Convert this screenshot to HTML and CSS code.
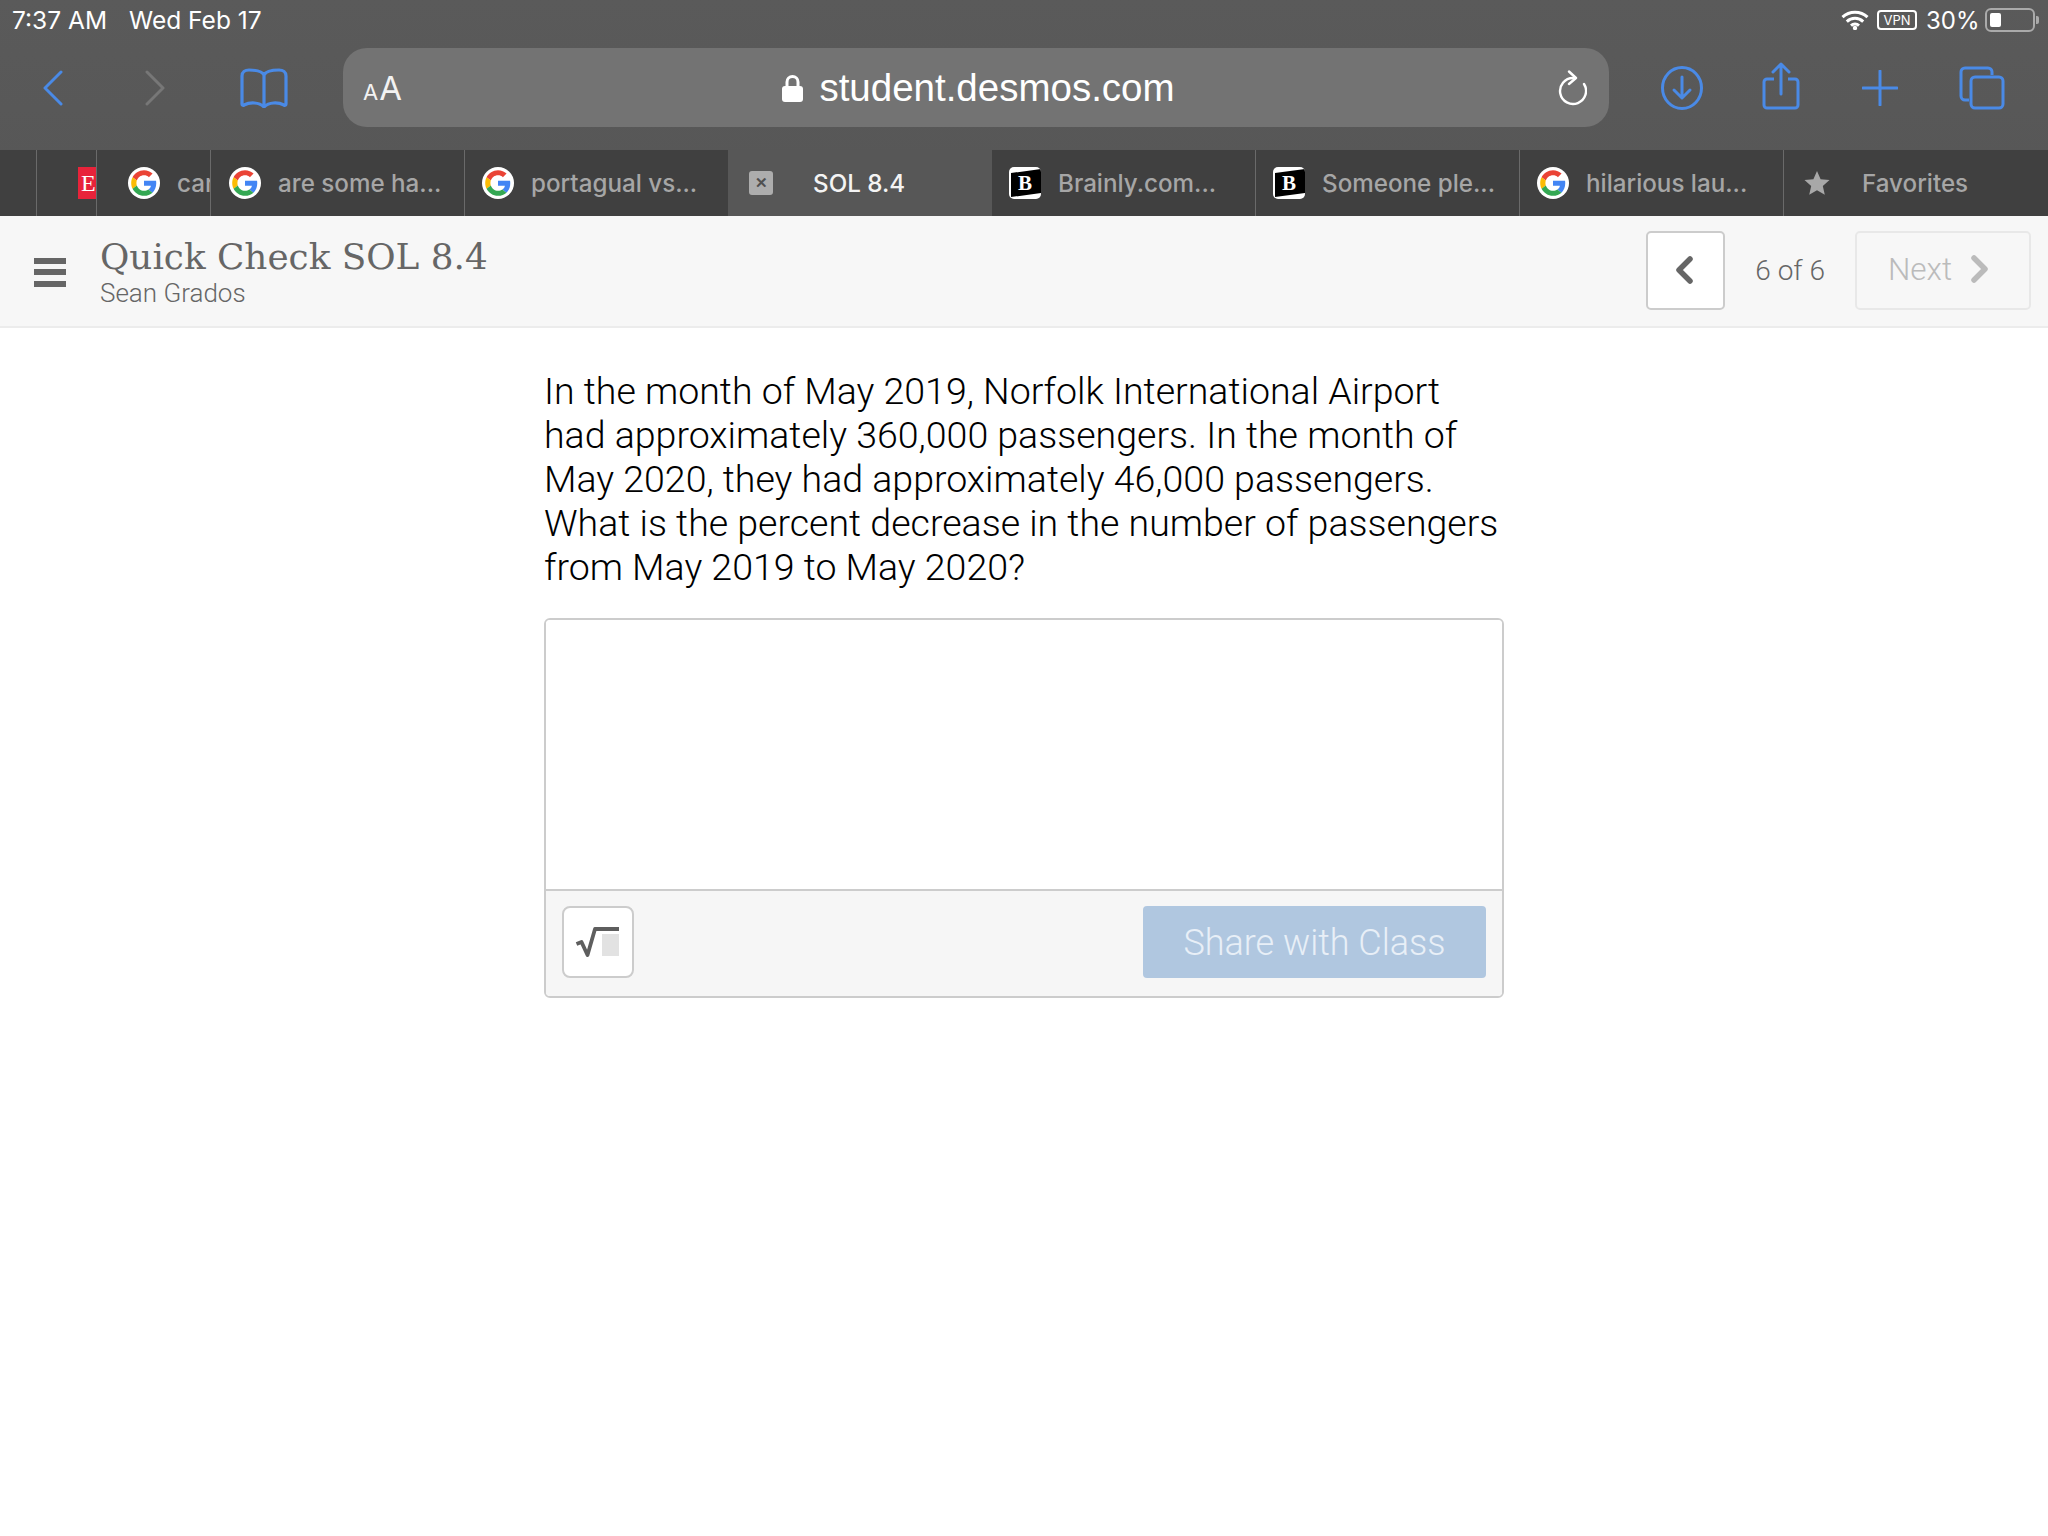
FILE: index.html
```html
<!DOCTYPE html>
<html lang="en">
<head>
<meta charset="utf-8">
<title>Quick Check SOL 8.4</title>
<link rel="stylesheet" href="styles.css">
</head>
<body>
<svg class="defs" width="0" height="0" aria-hidden="true">
  <symbol id="google" viewBox="-6 -6 60 60">
    <circle cx="24" cy="24" r="30" fill="#fff"/>
    <path fill="#EA4335" d="M24 9.5c3.54 0 6.71 1.22 9.21 3.6l6.85-6.85C35.9 2.38 30.47 0 24 0 14.62 0 6.51 5.38 2.56 13.22l7.98 6.19C12.43 13.72 17.74 9.5 24 9.5z"/>
    <path fill="#4285F4" d="M46.98 24.55c0-1.57-.15-3.09-.38-4.55H24v9.02h12.94c-.58 2.96-2.26 5.48-4.78 7.18l7.73 6c4.51-4.18 7.09-10.36 7.09-17.65z"/>
    <path fill="#FBBC05" d="M10.53 28.59c-.48-1.45-.76-2.99-.76-4.59s.27-3.14.76-4.59l-7.98-6.19C.92 16.46 0 20.12 0 24c0 3.88.92 7.54 2.56 10.78l7.97-6.19z"/>
    <path fill="#34A853" d="M24 48c6.48 0 11.93-2.13 15.89-5.81l-7.73-6c-2.15 1.45-4.92 2.3-8.16 2.3-6.26 0-11.57-4.22-13.47-9.91l-7.98 6.19C6.51 42.62 14.62 48 24 48z"/>
  </symbol>
</svg>

<header class="chrome">
  <div class="status">
    <div class="status-left"><span>7:37 AM</span><span>Wed Feb 17</span></div>
    <div class="status-right">
      <svg class="wifi" viewBox="0 0 28 20"><path d="M1.500 7.200a18 18 0 0 1 25 0M5.800 11.600a12 12 0 0 1 16.400 0M10 15.600a6 6 0 0 1 8 0" fill="none" stroke="#fff" stroke-width="3"/><circle cx="14" cy="18" r="2.200" fill="#fff"/></svg>
      <span class="vpn">VPN</span>
      <span class="pct">30%</span>
      <span class="battery"><span class="battery-fill"></span></span>
    </div>
  </div>
  <div class="toolbar">
    <svg class="ic ic-back" viewBox="0 0 21 36"><path d="M19 2 3 18l16 16" fill="none" stroke="#4a8ae6" stroke-width="3" stroke-linecap="round" stroke-linejoin="round"/></svg>
    <svg class="ic ic-forward" viewBox="0 0 21 36"><path d="M2 2l16 16L2 34" fill="none" stroke="#777" stroke-width="3" stroke-linecap="round" stroke-linejoin="round"/></svg>
    <svg class="ic ic-book" viewBox="0 0 48 40"><path d="M24 7C22 3 15 2 9 2 5 2 2 4 2 8v28c0 1 1 2 2 1 6-3 15-3 20 2 5-5 14-5 20-2 1 1 2 0 2-1V8c0-4-3-6-7-6-6 0-13 1-15 5Zm0 0v32" fill="none" stroke="#4a8ae6" stroke-width="3.200" stroke-linejoin="round"/></svg>
    <div class="url">
      <div class="url-aa"><span class="aa-small">A</span><span class="aa-big">A</span></div>
      <div class="url-host">
        <svg class="lock" viewBox="0 0 21 28"><path d="M5 13V8a5.500 5.500 0 0 1 11 0v5" fill="none" stroke="#fff" stroke-width="3"/><rect y="12" width="21" height="16" rx="3" fill="#fff"/></svg>
        <span>student.desmos.com</span>
      </div>
      <svg class="reload" viewBox="0 0 30 36"><path d="M16 8A13 13 0 1 0 27 14" fill="none" stroke="#fff" stroke-width="2.400" stroke-linecap="round"/><path d="M12 1.500 19 8l-7 6" fill="none" stroke="#fff" stroke-width="2.400" stroke-linecap="round" stroke-linejoin="round"/></svg>
    </div>
    <svg class="ic ic-download" viewBox="0 0 42 44"><ellipse cx="21" cy="22" rx="19.500" ry="20.500" fill="none" stroke="#4a8ae6" stroke-width="3"/><path d="M21 11v21M13 24l8 8 8-8" fill="none" stroke="#4a8ae6" stroke-width="3" stroke-linecap="round" stroke-linejoin="round"/></svg>
    <svg class="ic ic-share" viewBox="0 0 38 48"><path d="M12 17H5a3 3 0 0 0-3 3v23a3 3 0 0 0 3 3h28a3 3 0 0 0 3-3V20a3 3 0 0 0-3-3h-7" fill="none" stroke="#4a8ae6" stroke-width="3"/><path d="M19 32V2M11 10l8-8 8 8" fill="none" stroke="#4a8ae6" stroke-width="3" stroke-linecap="round" stroke-linejoin="round"/></svg>
    <svg class="ic ic-plus" viewBox="0 0 36 36"><path d="M18 1v34M1 18h34" fill="none" stroke="#4a8ae6" stroke-width="3" stroke-linecap="round"/></svg>
    <svg class="ic ic-tabs" viewBox="0 0 46 44"><path d="M10 34H6a4 4 0 0 1-4-4V6a4 4 0 0 1 4-4h23a4 4 0 0 1 4 4v3" fill="none" stroke="#4a8ae6" stroke-width="3"/><rect x="12" y="11" width="32" height="31" rx="4" fill="none" stroke="#4a8ae6" stroke-width="3"/></svg>
  </div>
  <nav class="tabs">
    <div class="tab tab-stub"></div>
    <div class="tab tab-e"><span class="fav-e">E</span></div>
    <div class="tab tab-narrow"><svg class="fav"><use href="#google"/></svg><span>car</span></div>
    <div class="tab tab-g1"><svg class="fav"><use href="#google"/></svg><span>are some ha...</span></div>
    <div class="tab"><svg class="fav"><use href="#google"/></svg><span>portagual vs...</span></div>
    <div class="tab tab-active"><span class="close">&#x2715;</span><span>SOL 8.4</span></div>
    <div class="tab tab-noline"><span class="fav-b"><span class="fav-b-letter">B</span></span><span>Brainly.com...</span></div>
    <div class="tab"><span class="fav-b"><span class="fav-b-letter">B</span></span><span>Someone ple...</span></div>
    <div class="tab"><svg class="fav"><use href="#google"/></svg><span>hilarious lau...</span></div>
    <div class="tab tab-fav"><svg class="star" viewBox="0 0 26 26"><path d="M13 1l3.600 8.300 8.900.8-6.700 5.900 2 8.800L13 20.200 5.200 24.800l2-8.800L.5 10.100l8.900-.8z" fill="#a8a8a8"/></svg><span>Favorites</span></div>
  </nav>
</header>

<section class="activity">
  <button class="burger" aria-label="Menu"><span></span><span></span><span></span></button>
  <div class="titles">
    <div class="title">Quick Check SOL 8.4</div>
    <div class="author">Sean Grados</div>
  </div>
  <div class="pager">
    <button class="prev" aria-label="Previous"><svg viewBox="0 0 20 28"><path d="M16 3 5 14l11 11" fill="none" stroke="#666" stroke-width="5.500" stroke-linecap="round" stroke-linejoin="round"/></svg></button>
    <span class="count">6 of 6</span>
    <button class="next"><span>Next</span><svg viewBox="0 0 20 28"><path d="M4 3l11 11L4 25" fill="none" stroke="#bbb" stroke-width="5.500" stroke-linecap="round" stroke-linejoin="round"/></svg></button>
  </div>
</section>

<main class="content">
  <p class="question">In the month of May 2019, Norfolk International Airport<br>had approximately 360,000 passengers. In the month of<br>May 2020, they had approximately 46,000 passengers.<br>What is the percent decrease in the number of passengers<br>from May 2019 to May 2020?</p>
  <div class="answer">
    <div class="answer-input"></div>
    <div class="answer-foot">
      <button class="math" aria-label="Math"><svg viewBox="0 0 46 32"><rect x="27" y="8" width="17" height="22" fill="#e2e2e2"/><path d="M1.500 18l5-2 6 13L20 3h24" fill="none" stroke="#5e5e5e" stroke-width="3.800" stroke-linejoin="round"/></svg></button>
      <button class="share">Share with Class</button>
    </div>
  </div>
</main>
</body>
</html>
```
FILE: styles.css
```css
* { box-sizing: border-box; }
html, body { margin: 0; padding: 0; }
body { width: 2048px; height: 1536px; background: #fff; font-family: Roboto, "Liberation Sans", Arial, sans-serif; font-weight: 300; overflow: hidden; }
button { font: inherit; padding: 0; cursor: default; }
.defs { position: absolute; }

.chrome { background: linear-gradient(#5a5a5a, #565656); color: #fff; font-weight: 400; }
.status { height: 40px; display: flex; justify-content: space-between; align-items: center; padding: 0 13px 0 12px; font-family: Inter, sans-serif; font-size: 24.500px; }
.status-left { display: flex; gap: 22px; }
.status-right { display: flex; align-items: center; }
.wifi { width: 28px; height: 20px; }
.vpn { margin-left: 8px; width: 40px; height: 20px; border: 2px solid #fff; border-radius: 4px; font-size: 13px; line-height: 16px; text-align: center; }
.pct { margin-left: 9px; width: 52px; font-size: 24px; }
.battery { margin-left: 7px; width: 50px; height: 24px; padding: 3px; border: 2px solid #aaa; border-radius: 6px; display: block; position: relative; }
.battery::after { content: ""; position: absolute; right: -6px; top: 6px; width: 3px; height: 8px; background: #aaa; border-radius: 0 2px 2px 0; }
.battery-fill { display: block; width: 11px; height: 100%; background: #fff; border-radius: 2px; }

.toolbar { height: 110px; padding: 8px 0 22px 42px; display: flex; align-items: center; }
.ic { flex: none; display: block; }
.ic-back { width: 21px; height: 36px; }
.ic-forward { width: 21px; height: 36px; margin-left: 82px; }
.ic-book { width: 48px; height: 40px; margin-left: 74px; }
.url { flex: none; margin: -1px 0 0 55px; width: 1266px; height: 79px; background: #737373; border-radius: 24px; display: grid; grid-template-columns: 1fr auto 1fr; align-items: center; padding: 0 22px 0 20px; }
.url-aa { font-family: Inter, sans-serif; color: #f2f2f2; display: flex; align-items: baseline; }
.aa-small { font-size: 22px; }
.aa-big { font-size: 33px; margin-left: 1px; }
.url-host { display: flex; align-items: center; gap: 16px; padding-left: 7px; font-family: "Liberation Sans", sans-serif; font-size: 38.500px; color: #fff; }
.lock { width: 21px; height: 28px; }
.reload { justify-self: end; width: 30px; height: 36px; }
.ic-download { width: 42px; height: 44px; margin-left: 52px; }
.ic-share { width: 38px; height: 48px; margin-left: 59px; margin-top: -4px; }
.ic-plus { width: 36px; height: 36px; margin-left: 62px; }
.ic-tabs { width: 46px; height: 44px; margin-left: 61px; }

.tabs { height: 66px; display: grid; grid-template-columns: 36px 60px 114px 254px 264px 264px 263px 264px 264px 265px; background: #404040; }
.tab { display: flex; align-items: center; gap: 17px; padding-left: 17px; overflow: hidden; white-space: nowrap; border-left: 1px solid #6a6a6a; font-family: Inter, sans-serif; font-weight: 500; font-size: 24.200px; color: #a6a6a6; }
.tab-stub { border-left: 0; }
.tab-e { padding-left: 41px; }
.tab-narrow { padding-left: 31px; }
.tab-g1 { padding-left: 18px; }
.tab-active { background: #575757; color: #f4f4f4; border-left: 0; padding-left: 21px; gap: 40px; }
.tab-noline { border-left: 0; }
.tab-fav { padding-left: 20px; gap: 32px; }
.fav { flex: none; width: 32px; height: 32px; }
.fav-e { flex: none; width: 32px; height: 32px; background: #e8233a; color: #fff; font-family: "Liberation Serif", serif; font-weight: 400; font-size: 24px; line-height: 32px; padding-left: 3px; }
.fav-b { flex: none; width: 32px; height: 32px; border-radius: 5px; background: #fff; position: relative; overflow: hidden; display: flex; align-items: center; justify-content: center; }
.fav-b::before { content: ""; position: absolute; left: 2px; right: 0; top: 4px; bottom: 4px; background: #000; transform: skewY(-8deg); }
.fav-b-letter { position: relative; color: #fff; font-family: "Liberation Serif", serif; font-weight: 700; font-size: 21px; line-height: 1; }
.close { flex: none; width: 24px; height: 24px; border-radius: 3px; background: #adadad; color: #505050; font-size: 15px; font-weight: 700; line-height: 24px; text-align: center; }
.star { flex: none; width: 26px; height: 26px; }

.activity { height: 112px; background: #f7f7f7; border-bottom: 2px solid #ececec; display: flex; align-items: center; padding: 0 17px 0 34px; }
.burger { width: 32px; height: 29px; border: 0; background: none; display: flex; flex-direction: column; justify-content: space-between; margin-top: 2px; }
.burger span { display: block; height: 6px; background: #666; }
.titles { margin-left: 34px; flex: 1; }
.title { font-family: "DejaVu Serif", serif; font-weight: 400; font-size: 35.800px; line-height: 44px; color: #666; }
.author { font-size: 26px; line-height: 28px; color: #666; }
.pager { display: flex; align-items: center; margin-top: -2px; }
.prev { width: 79px; height: 79px; background: #fff; border: 2px solid #ccc; border-radius: 5px; display: flex; align-items: center; justify-content: center; padding-right: 4px; }
.prev svg { width: 20px; height: 28px; }
.count { margin: 0 30px; font-size: 28px; color: #666; }
.next { width: 176px; height: 79px; background: #f7f7f7; border: 2px solid #e8e8e8; border-radius: 5px; display: flex; align-items: center; justify-content: center; gap: 18px; font-size: 31.500px; color: #bbb; padding: 0 8px 2px 0; }
.next svg { width: 20px; height: 28px; }

.content { width: 960px; margin: 0 auto; padding-top: 41px; }
.question { margin: 0; font-size: 37.500px; line-height: 44px; color: #000; }
.answer { margin-top: 29px; height: 380px; border: 2px solid #ccc; border-radius: 6px; display: flex; flex-direction: column; overflow: hidden; }
.answer-input { flex: 1; background: #fff; border-bottom: 2px solid #ccc; }
.answer-foot { height: 105px; background: #f6f6f6; display: flex; justify-content: space-between; align-items: center; padding: 0 16px 4px; }
.math { width: 72px; height: 72px; background: #fff; border: 2px solid #ccc; border-radius: 8px; display: flex; align-items: center; justify-content: center; }
.math svg { width: 46px; height: 32px; }
.share { width: 343px; height: 72px; padding-top: 2px; background: #b0c7e0; border: 0; border-radius: 4px; color: #e8eff7; font-size: 36px; }
```
